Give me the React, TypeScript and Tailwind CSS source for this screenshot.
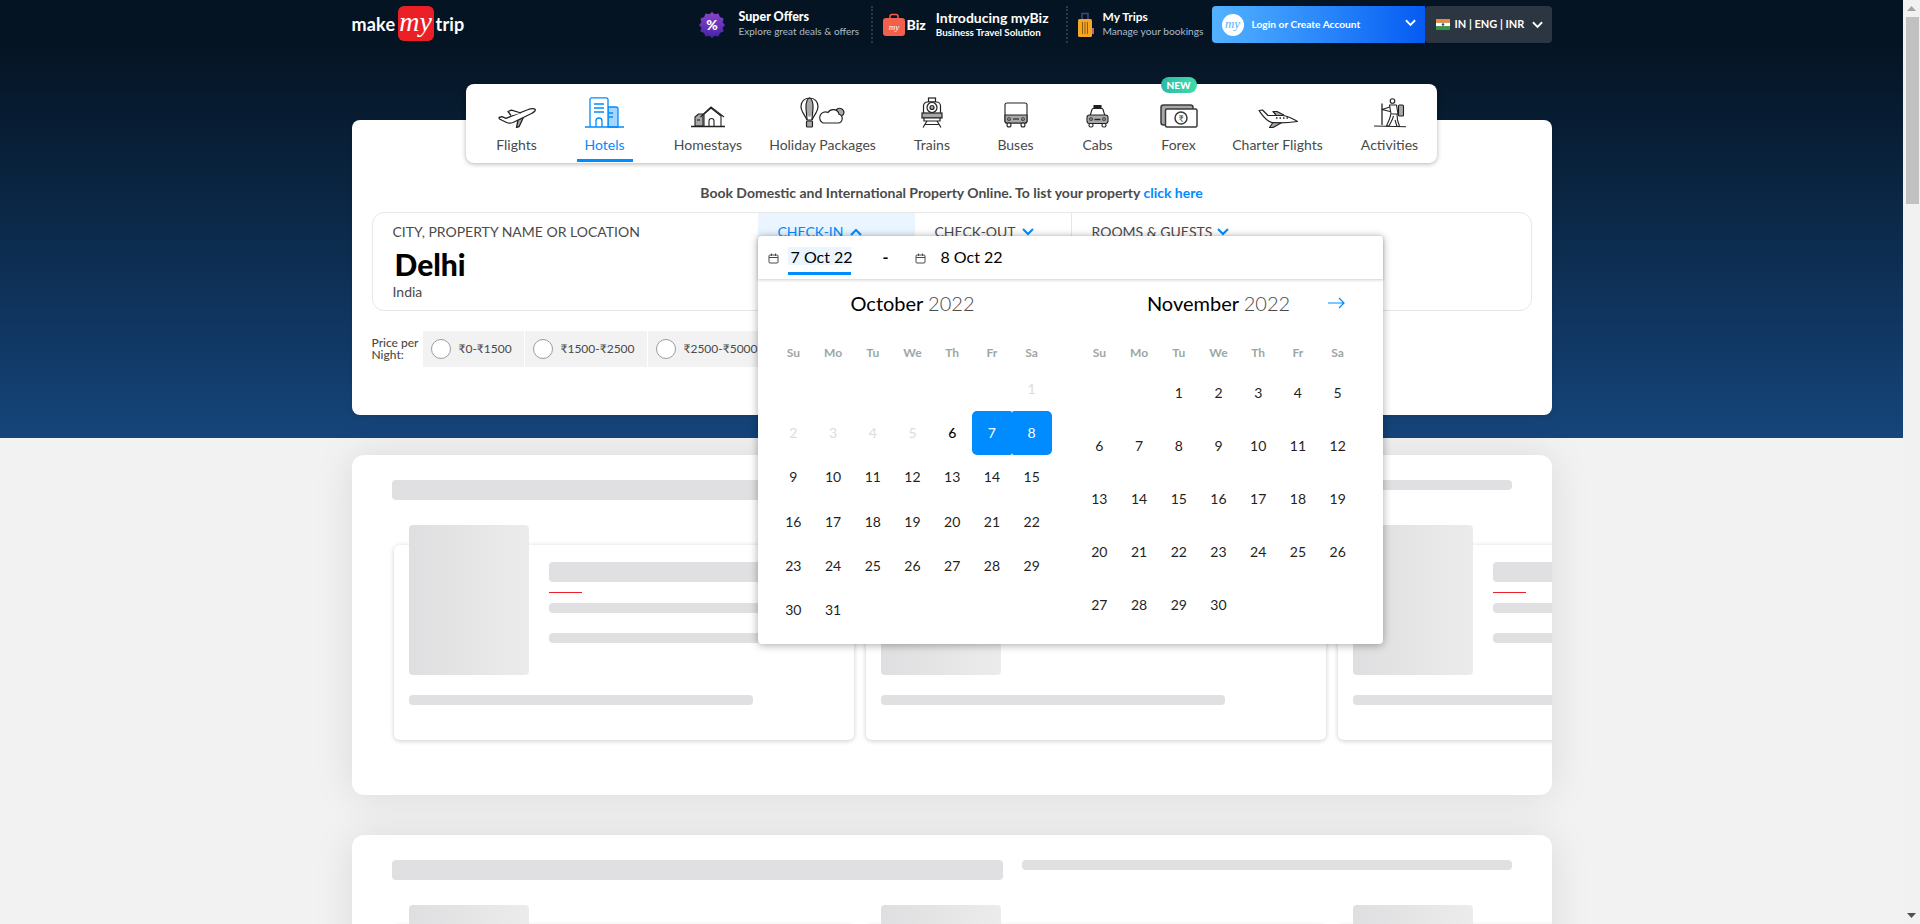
import React from "react";

const Chevron = ({ up = false, className = "" }: { up?: boolean; className?: string }) => (
  <svg viewBox="0 0 12 8" className={className} fill="none" stroke="currentColor" strokeWidth="2">
    <path d={up ? "M1 7l5-5 5 5" : "M1 1l5 5 5-5"} />
  </svg>
);

const G = "#a8a8a8";
const K = "#222222";

const FlightIcon = () => (
  <svg width="38" height="21" viewBox="0 0 38 21" fill="none" stroke={K} strokeWidth="1.3" strokeLinejoin="round">
    <path d="M20 13l-1.500 7.500 2.500-.8 4.500-9.500z" fill={G} />
    <path d="M1 10.500l3-.8 4 1.600L29 3c3-1.200 6.500-2 8-.8.800 1-.500 3-3.500 4.300L15 15.500c-2.500 1-4.500 1-6.500 0L1.500 12z" fill="#fff" />
    <path d="M13 8.500L10 4.500l3.500-1.300L23 6" fill="#fff" />
  </svg>
);

const HotelIcon = () => (
  <svg width="39" height="31" viewBox="0 0 39 31" fill="none" stroke="#008cff" strokeWidth="1.300">
    <path d="M23 10h8a2 2 0 0 1 2 2v18H23z" fill="#a8d5ff" />
    <path d="M5 30V2.500A1.800 1.800 0 0 1 7 .8h14a1.800 1.800 0 0 1 2 1.700V30" fill="#fff" />
    <path d="M9 7h10M9 11h10M9 15h10M24 16h4M24 20h4" strokeWidth="1.500" />
    <path d="M11 30v-6a3 3 0 0 1 6 0v6" />
    <path d="M0 30h39" />
  </svg>
);

const HomeIcon = () => (
  <svg width="34" height="22" viewBox="0 0 34 22" fill="none" stroke={K} strokeWidth="1.100" strokeLinejoin="round">
    <path d="M4 11L7.500 8H12v12H4z" fill={G} />
    <path d="M6 14h3" />
    <path d="M13 20V8l7-6 10 8v10" fill="#fff" />
    <path d="M9.500 11L20 1l13 10" />
    <path d="M18 20v-5a2.500 2.500 0 0 1 5 0v5" />
    <path d="M0 20.500h34" strokeWidth="1.300" />
  </svg>
);

const HolidayIcon = () => (
  <svg width="45" height="31" viewBox="0 0 45 31" fill="none" stroke={K} strokeWidth="1.200">
    <ellipse cx="9.500" cy="10.500" rx="3.500" ry="9.500" fill={G} stroke="none" />
    <path d="M9.500 1C4.500 1 1 4.500 1 9.500 1 15 5.500 18.500 7 23h5c1.500-4.500 6-8 6-13.500C18 4.500 14.500 1 9.500 1z" />
    <path d="M9.500 1c-2 0-3.500 4-3.500 9 0 5 1 9 1 13M9.500 1c2 0 3.500 4 3.500 9 0 5-1 9-1 13" />
    <rect x="6.500" y="24" width="6" height="6" rx="1" fill={G} />
    <path d="M36 13a4.500 4.500 0 0 1 8 2.500 4 4 0 0 1-4 3.500" fill={G} />
    <path d="M23 26h15a4.500 4.500 0 0 0 1-8.800 6 6 0 0 0-11-1.700 5.300 5.300 0 0 0-5 10.500z" fill="#fff" />
  </svg>
);

const TrainIcon = () => (
  <svg width="24" height="31" viewBox="0 0 24 31" fill="none" stroke={K} strokeWidth="1.200">
    <rect x="8.500" y="1" width="7" height="4" fill="#fff" />
    <rect x="3.500" y="5" width="17" height="14" rx="4" fill="#fff" />
    <circle cx="12" cy="10.500" r="5" />
    <circle cx="12" cy="10.500" r="2" fill={G} />
    <rect x="2" y="16" width="20" height="5" fill={G} />
    <path d="M4 21h16v3H4z" fill="#fff" />
    <path d="M3 30.500l4-6.500M21 30.500l-4-6.500M5.500 27.500h13" />
  </svg>
);

const BusIcon = () => (
  <svg width="24" height="26" viewBox="0 0 24 26" fill="none" stroke={K} strokeWidth="1.100">
    <rect x="1" y="1" width="22" height="20" rx="2" fill="#fff" />
    <path d="M1 13h22v6a2 2 0 0 1-2 2H3a2 2 0 0 1-2-2z" fill={G} />
    <circle cx="5" cy="17" r="1.300" fill="#fff" />
    <circle cx="19" cy="17" r="1.300" fill="#fff" />
    <path d="M9 17h6" />
    <rect x="3" y="21" width="4" height="4" rx="2" fill="#fff" />
    <rect x="17" y="21" width="4" height="4" rx="2" fill="#fff" />
  </svg>
);

const CabIcon = () => (
  <svg width="23" height="23" viewBox="0 0 23 23" fill="none" stroke={K} strokeWidth="1.100">
    <rect x="8" y="0.500" width="7" height="2.500" fill={K} />
    <path d="M4 11l2-6.500a1.500 1.500 0 0 1 1.500-1h8a1.500 1.500 0 0 1 1.500 1l2 6.500" fill="#fff" />
    <rect x="1" y="10" width="21" height="8.500" rx="2.500" fill={G} />
    <circle cx="5" cy="14" r="1.300" fill="#fff" />
    <circle cx="18" cy="14" r="1.300" fill="#fff" />
    <path d="M8.500 14.500h6" strokeWidth="1.400" />
    <rect x="3" y="18.500" width="4" height="3.500" rx="1.500" fill="#fff" />
    <rect x="16" y="18.500" width="4" height="3.500" rx="1.500" fill="#fff" />
  </svg>
);

const ForexIcon = () => (
  <svg width="38" height="24" viewBox="0 0 38 24" fill="none" stroke="#3a3a3a" strokeWidth="1.500">
    <rect x="1" y="1" width="32" height="20" rx="2.500" fill={G} />
    <rect x="5.500" y="5" width="31.500" height="18" rx="1.500" fill="#fff" />
    <circle cx="21" cy="14" r="6" />
    <text x="21" y="17.500" textAnchor="middle" fontSize="9" fill="#3a3a3a" stroke="none" fontFamily="Lato, 'Noto Sans', sans-serif">₹</text>
  </svg>
);

const CharterIcon = () => (
  <svg width="40" height="19" viewBox="0 0 40 19" fill="none" stroke={K} strokeWidth="1.200" strokeLinejoin="round">
    <path d="M18 6l-3-3.500h4L26 6" fill={G} />
    <path d="M1 1.500l3.500-.5L10 6.500h14c6 0 11 3.500 15.500 6-8 1.200-20 1.800-26 .8C8 12 5 7 1 1.500z" fill="#fff" />
    <path d="M18 9h14" strokeWidth="1.600" strokeDasharray="1.500 2" />
    <path d="M15 13.500l-3.500 5h3.500l8-4.500z" fill={G} />
  </svg>
);

const ActivityIcon = () => (
  <svg width="32" height="30" viewBox="0 0 32 30" fill="none" stroke={K} strokeWidth="1.100" strokeLinejoin="round">
    <circle cx="18.500" cy="3" r="2.300" />
    <rect x="24.500" y="7" width="5" height="11" rx="1" fill={G} />
    <path d="M15.500 7h7l1.500 9h-7z" fill="#fff" />
    <path d="M16 9l-8 2.500 8 2" />
    <path d="M8 5.500V27" strokeWidth="1.300" />
    <path d="M17 16l-1.500 5-3 7h2.500l3.500-7 1-3M23 16l.5 6 2 6.500h-2.500L21 22" fill="#fff" />
    <path d="M0 28l32 .8" />
  </svg>
);

const tabs = [
  { label: "Flights", w: "w-[80px]", icon: <FlightIcon /> },
  { label: "Hotels", w: "w-[96px]", icon: <HotelIcon />, active: true },
  { label: "Homestays", w: "w-[111px]", icon: <HomeIcon /> },
  { label: "Holiday Packages", w: "w-[118px]", icon: <HolidayIcon /> },
  { label: "Trains", w: "w-[101px]", icon: <TrainIcon /> },
  { label: "Buses", w: "w-[66px]", icon: <BusIcon /> },
  { label: "Cabs", w: "w-[98px]", icon: <CabIcon /> },
  { label: "Forex", w: "w-[64px]", icon: <ForexIcon />, isNew: true },
  { label: "Charter Flights", w: "w-[134px]", icon: <CharterIcon /> },
  { label: "Activities", w: "w-[90px]", icon: <ActivityIcon /> },
];

const Header = () => (
  <header className="w-[1200px] mx-auto h-[49px] flex justify-between items-start">
    <div className="flex items-center h-[35px] mt-[6px] text-white text-[18px] font-bold tracking-[0.2px] leading-none">
      <span className="w-[46px]">make</span>
      <span className="w-[36px] h-[35px] rounded-[6px] bg-[#eb2026] flex items-center justify-center text-[28px] tracking-normal italic font-normal font-['Liberation_Serif',serif] pb-[4px]">my</span>
      <span className="ml-[2px]">trip</span>
    </div>
    <div className="flex items-start mt-[6px] h-[37px] w-[853px] text-white">
      <div className="w-[172px] h-[37px] flex items-center">
        <svg width="26" height="26" viewBox="-1 -1 28 28" className="mb-[-1px]">
          <defs>
            <linearGradient id="so" x1="0" y1="0" x2="0" y2="1">
              <stop offset="0" stopColor="#8a46c9" />
              <stop offset="1" stopColor="#4523a8" />
            </linearGradient>
          </defs>
          <path
            d="M13 -1l3 2.500 4-1 1.500 4 4 1.500-1 4L27 13l-2.500 3 1 4-4 1.500-1.500 4-4-1-3 2.500-3-2.500-4 1-1.500-4-4-1.500 1-4L-1 13l2.500-3-1-4 4-1.500 1.500-4 4 1z"
            fill="url(#so)"
          />
          <text x="13" y="18.500" textAnchor="middle" fontSize="15" fontWeight="900" fill="#fff" fontFamily="Lato, sans-serif">%</text>
        </svg>
        <div className="ml-[14px] mt-[-1px]">
          <div className="text-[12.5px] leading-[15px] font-black whitespace-nowrap">Super Offers</div>
          <div className="text-[10px] leading-[15px] text-[#a9bdcc] whitespace-nowrap">Explore great deals &amp; offers</div>
        </div>
      </div>
      <div className="w-[195px] h-[37px] pl-[9px] border-l-2 border-dotted border-[#2a3a4c] flex items-center">
        <svg width="24" height="24" viewBox="0 0 24 24" className="shrink-0">
          <path d="M8 6V3.500A2 2 0 0 1 10 1.500h4a2 2 0 0 1 2 2V6" fill="none" stroke="#f0604d" strokeWidth="1.500" />
          <rect x="1" y="5" width="22" height="18" rx="3" fill="#f0604d" />
          <text x="12" y="17" textAnchor="middle" fontSize="9" fontStyle="italic" fill="#fff" fontFamily="Liberation Serif, serif">my</text>
        </svg>
        <span className="ml-[1px] text-[14px] font-black">Biz</span>
        <div className="ml-[10px]">
          <div className="text-[14px] leading-[15px] font-bold whitespace-nowrap">Introducing myBiz</div>
          <div className="text-[9.800px] leading-[14px] font-bold whitespace-nowrap">Business Travel Solution</div>
        </div>
      </div>
      <div className="w-[146px] h-[37px] pl-[9px] border-l-2 border-dotted border-[#2a3a4c] flex items-center">
        <svg width="17" height="26" viewBox="0 0 17 26" className="shrink-0">
          <path d="M5 7V1.500h6V7" fill="none" stroke="#3d4a78" strokeWidth="1.500" />
          <rect x="1" y="7" width="14" height="18" rx="1.500" fill="#f5a623" />
          <path d="M5.500 10v12M8 10v12M10.500 10v12" stroke="#8a5a12" strokeWidth="1" />
          <rect x="15" y="16" width="2" height="6" fill="#c2606a" />
        </svg>
        <div className="ml-[9px] mt-[-2px]">
          <div className="text-[12px] leading-[15px] font-bold whitespace-nowrap">My Trips</div>
          <div className="text-[10.200px] leading-[14px] text-[#a9bdcc] whitespace-nowrap">Manage your bookings</div>
        </div>
      </div>
      <div className="w-[213px] h-[37px] rounded-l-[4px] bg-linear-to-r from-[#53b2fe] to-[#065af3] flex items-center pl-[10px] pr-[9px]">
        <span className="w-[22px] h-[22px] rounded-full bg-white text-[#53b2fe] flex items-center justify-center text-[13px] italic font-['Liberation_Serif',serif] pb-[2px]">my</span>
        <span className="ml-[8px] text-[10.200px] font-bold whitespace-nowrap">Login or Create Account</span>
        <Chevron className="ml-auto w-[11px] h-[8px] mb-[3px]" />
      </div>
      <div className="w-[127px] h-[37px] rounded-[4px] bg-[#2c3642] flex items-center pl-[11px] pr-[9px]">
        <svg width="14" height="11" viewBox="0 0 14 11" className="shrink-0">
          <rect width="14" height="3.700" fill="#f08a2c" />
          <rect y="3.700" width="14" height="3.700" fill="#fff" />
          <rect y="7.400" width="14" height="3.600" fill="#2e9c3a" />
          <circle cx="7" cy="5.500" r="1.300" fill="#33468f" />
        </svg>
        <span className="ml-[5px] text-[11px] font-bold whitespace-nowrap">IN | ENG | INR</span>
        <Chevron className="ml-auto w-[11px] h-[8px]" />
      </div>
    </div>
  </header>
);

const Tabs = () => (
  <nav className="relative z-10 ml-[114px] w-[971px] h-[79px] -mt-[36px] pl-[11px] flex bg-white rounded-[8px] shadow-[0_1px_5px_0_rgba(0,0,0,0.3)]">
    {tabs.map((t) => (
      <div key={t.label} className={`${t.w} relative shrink-0 flex flex-col items-center pt-[14px]`}>
        {t.isNew && (
          <span className="absolute -top-[7px] left-1/2 -translate-x-1/2 w-[36px] h-[16px] rounded-full bg-linear-to-r from-[#2fb9a4] to-[#3fdca9] text-white text-[10px] leading-[16px] font-black text-center">
            NEW
          </span>
        )}
        <div className="h-[30px] flex items-end justify-center">{t.icon}</div>
        <div className={`mt-[7px] text-[14px] leading-[20px] whitespace-nowrap ${t.active ? "text-[#008cff]" : "text-[#4a4a4a]"}`}>{t.label}</div>
        {t.active && <div className="mt-[4px] w-[56px] h-[3px] bg-[#008cff]" />}
      </div>
    ))}
  </nav>
);

const CalIcon = () => (
  <svg width="11" height="11" viewBox="0 0 11 11" fill="none" stroke="#4a4a4a" strokeWidth="1" className="shrink-0">
    <rect x="1" y="2" width="9" height="8" rx="1" />
    <path d="M1 4.500h9M3.500 .5v2.500M7.500 .5v2.500" />
  </svg>
);

const WEEK = ["Su", "Mo", "Tu", "We", "Th", "Fr", "Sa"];

const Month = ({ name, offset, days, rows, left }: { name: string; offset: number; days: number; rows: number; left?: boolean }) => {
  const cells: (number | null)[] = [];
  for (let i = 0; i < offset; i++) cells.push(null);
  for (let d = 1; d <= days; d++) cells.push(d);
  while (cells.length < rows * 7) cells.push(null);
  return (
    <div className="w-[278px] shrink-0">
      <div className="h-[30px] text-center text-[20px] leading-[30px] whitespace-nowrap text-black">
        {name} <span className="font-light text-[#4a4a4a]">2022</span>
      </div>
      <div className="mt-[25px] h-[20px] grid grid-cols-7 text-center text-[12px] leading-[20px] font-bold text-[#9ba7a7]">
        {WEEK.map((w) => (
          <div key={w}>{w}</div>
        ))}
      </div>
      <div className={`${rows === 6 ? "h-[265px] grid-rows-6" : "h-[264px] grid-rows-5"} mt-[4px] grid grid-cols-7 text-[14px] text-center`}>
        {cells.map((d, i) => {
          if (d === null) return <div key={i} />;
          let cls = "text-[#1f1f1f]";
          if (left && d < 6) cls = "text-[#dcdcdc]";
          if (left && d === 6) cls = "text-black font-medium";
          if (left && d === 7) cls = "bg-[#008cff] text-white rounded-l-[5px] rounded-r-[2px]";
          if (left && d === 8) cls = "bg-[#008cff] text-white rounded-r-[5px] rounded-l-[2px]";
          return (
            <div key={i} className={`flex items-center justify-center ${cls}`}>
              {d}
            </div>
          );
        })}
      </div>
    </div>
  );
};

const Popup = () => (
  <div className="absolute left-0 top-[23px] z-20 w-[625px] h-[408px] bg-white rounded-[4px] shadow-[0_1px_8px_0_rgba(0,0,0,0.35)]">
    <div className="relative h-[43px] flex items-start shadow-[0_1px_3px_0_rgba(0,0,0,0.2)]">
      <div className="ml-[10px] mt-[17px]"><CalIcon /></div>
      <div className="ml-[9px] mt-[11px] w-[63px] h-[28px] border-b-[3px] border-[#008cff]">
        <div className="h-[18px] bg-[#eaf5ff] pl-[3px] text-[16px] leading-[20px] text-black whitespace-nowrap">7 Oct 22</div>
      </div>
      <div className="ml-[32px] mt-[12px] text-[16px] leading-[18px] font-bold text-black">-</div>
      <div className="ml-[27px] mt-[17px]"><CalIcon /></div>
      <div className="ml-[14px] mt-[12px] text-[16px] leading-[18px] text-black whitespace-nowrap">8 Oct 22</div>
    </div>
    <div className="relative flex pl-[16px] pt-[9px] gap-[28px]">
      <Month name="October" offset={6} days={31} rows={6} left />
      <Month name="November" offset={2} days={30} rows={5} />
      <svg width="17" height="12" viewBox="0 0 17 12" fill="none" stroke="#008cff" strokeWidth="1.200" className="absolute left-[570px] top-[18px]">
        <path d="M0 6h16M11 1l5 5-5 5" />
      </svg>
    </div>
  </div>
);

const SearchBox = () => (
  <div className="mt-[9px] ml-[20px] w-[1160px] h-[99px] border border-[#e7e7e7] rounded-[12px] flex">
    <div className="w-[385px] pl-[20px] pt-[9px] shrink-0">
      <div className="text-[14px] leading-[20px] text-[#4a4a4a] whitespace-nowrap">CITY, PROPERTY NAME OR LOCATION</div>
      <div className="mt-[4px] pl-[2px] text-[30px] leading-[36px] font-black text-black">Delhi</div>
      <div className="mt-[1px] text-[14px] leading-[18px] text-[#4a4a4a]">India</div>
    </div>
    <div className="relative w-[157px] shrink-0 bg-[#eaf5ff] pl-[20px] pt-[9px] text-[14px] leading-[20px] text-[#008cff] flex items-start">
      <span>CHECK-IN</span>
      <Chevron up className="ml-[7px] mt-[6px] w-[12px] h-[8px] text-[#008cff]" />
      <Popup />
    </div>
    <div className="w-[157px] shrink-0 border-r border-[#e7e7e7] pl-[20px] pt-[9px] text-[14px] leading-[20px] text-[#4a4a4a] flex items-start">
      <span>CHECK-OUT</span>
      <Chevron className="ml-[6px] mt-[6px] w-[12px] h-[8px] text-[#008cff]" />
    </div>
    <div className="flex-1 pl-[20px] pt-[9px] text-[14px] leading-[20px] text-[#4a4a4a] flex items-start">
      <span>ROOMS &amp; GUESTS</span>
      <Chevron className="ml-[5px] mt-[6px] w-[12px] h-[8px] text-[#008cff]" />
    </div>
  </div>
);

const Price = ({ label, w }: { label: string; w: string }) => (
  <div className={`${w} h-[36px] bg-[#f2f2f2] flex items-center pl-[8px] shrink-0`}>
    <span className="w-[20px] h-[20px] rounded-full bg-white border border-[#9b9b9b] shrink-0" />
    <span className="ml-[8px] text-[12px] text-[#4a4a4a] whitespace-nowrap">{label}</span>
  </div>
);

const MainCard = () => (
  <div className="flow-root w-[1200px] h-[295px] mx-auto bg-white rounded-[8px] shadow-[0_1px_5px_0_rgba(0,0,0,0.1)]">
    <Tabs />
    <div className="mt-[20px] h-[20px] text-center text-[14px] leading-[20px] font-bold text-[#4a4a4a]">
      Book Domestic and International Property Online. To list your property <span className="text-[#008cff]">click here</span>
    </div>
    <SearchBox />
    <div className="mt-[20px] ml-[20px] flex items-center gap-[1px]">
      <div className="w-[50px] text-[12px] leading-[12px] font-medium text-[#4a4a4a] shrink-0">Price per Night:</div>
      <Price label="₹0-₹1500" w="w-[101px]" />
      <Price label="₹1500-₹2500" w="w-[122px]" />
      <Price label="₹2500-₹5000" w="w-[122px]" />
    </div>
  </div>
);

const Bar = ({ className }: { className: string }) => <div className={`bg-[#e0dfe1] rounded-[4px] ${className}`} />;

const SkeletonCard = () => (
  <div className="w-[460px] h-[195px] shrink-0 bg-white rounded-[6px] pl-[15px] shadow-[0_1px_5px_0_rgba(0,0,0,0.2)]">
    <div className="flex -mt-[20px] gap-[20px]">
      <div className="w-[120px] h-[150px] rounded-[4px] bg-linear-to-r from-[#dfdee0] to-[#ececec] shrink-0" />
      <div className="pt-[37px]">
        <Bar className="w-[290px] h-[20px]" />
        <div className="mt-[10px] w-[33px] h-[1px] bg-[#eb2026]" />
        <Bar className="mt-[10px] w-[290px] h-[10px]" />
        <Bar className="mt-[20px] w-[290px] h-[10px]" />
      </div>
    </div>
    <Bar className="mt-[20px] w-[344px] h-[10px]" />
  </div>
);

const Section = () => (
  <section className="w-[1200px] h-[340px] mx-auto mb-[40px] bg-white rounded-[12px] overflow-hidden pt-[25px] shadow-[0_1px_40px_0_rgba(0,0,0,0.1)]">
    <div className="flex items-start pl-[40px] gap-[19px]">
      <Bar className="w-[611px] h-[20px]" />
      <Bar className="w-[490px] h-[10px]" />
    </div>
    <div className="mt-[45px] pl-[42px] flex gap-[12px] pb-[8px]">
      <SkeletonCard />
      <SkeletonCard />
      <SkeletonCard />
    </div>
  </section>
);

const Scrollbar = () => (
  <div className="w-[17px] h-[924px] shrink-0 bg-[#f1f1f1] flex flex-col items-center">
    <div className="h-[17px] flex items-center justify-center">
      <svg width="9" height="5" viewBox="0 0 9 5"><path d="M4.500 0L9 5H0z" fill="#a3a3a3" /></svg>
    </div>
    <div className="ml-[1px] w-[13px] h-[187px] bg-[#c1c1c1]" />
    <div className="mt-auto h-[17px] flex items-center justify-center">
      <svg width="9" height="5" viewBox="0 0 9 5"><path d="M0 0h9L4.500 5z" fill="#505050" /></svg>
    </div>
  </div>
);

export default function App() {
  return (
    <div className="flex w-[1920px] h-[924px] overflow-hidden bg-[#f2f2f2] font-['Lato','Noto_Sans',sans-serif]">
      <main className="w-[1903px] h-[924px] overflow-hidden shrink-0">
        <div className="h-[438px] bg-linear-to-b from-[#051423] from-10% to-[#15457c]">
          <Header />
          <div className="pt-[71px]">
            <MainCard />
          </div>
        </div>
        <div className="pt-[17px]">
          <Section />
          <Section />
        </div>
      </main>
      <Scrollbar />
    </div>
  );
}
